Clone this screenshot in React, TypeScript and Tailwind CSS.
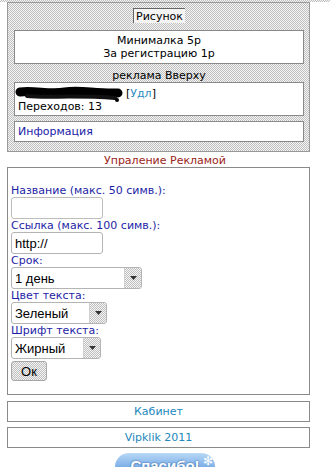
import React from "react";

const checker =
  "bg-[image:repeating-conic-gradient(#c0c0c0_0%_25%,#f4f4f4_0%_50%)] bg-[length:2px_2px]";

function Select({ w, text }: { w: string; text: string }) {
  return (
    <div
      className={`${w} h-[22px] flex items-stretch rounded-[3px] border border-[#b4b4b4] bg-white overflow-hidden`}
    >
      <div className="flex-1 flex items-center pl-[3px] font-['Liberation_Sans',Arial,sans-serif] text-[13px] text-black">
        {text}
      </div>
      <div
        className={`w-[17px] flex items-center justify-center ${checker} border-l border-[#d0d0d0]`}
      >
        <svg width="7" height="4" viewBox="0 0 7 4">
          <path d="M0 0 L7 0 L3.5 4 Z" fill="#333" />
        </svg>
      </div>
    </div>
  );
}

export default function App() {
  return (
    <div className="w-[330px] h-[467px] overflow-hidden bg-white font-['DejaVu_Sans',Verdana,sans-serif] text-[11px] leading-[13px] text-black">
      <div className={`h-[2px] ${checker}`} />
      {/* top panel */}
      <div
        className={`ml-[7px] w-[303px] border border-[#999] ${checker} pl-[6px] pr-[5px] pt-[5px] pb-[9px]`}
      >
        <div className="flex justify-center">
          <div className="h-[15px] leading-[15px] border-t border-l border-[#666] px-[2px] bg-[#f4f4f4]">
            Рисунок
          </div>
        </div>
        <div className="mt-[7px] border border-[#8a8a8a] bg-white py-[3px] text-center">
          <div>Минималка 5р</div>
          <div>За регистрацию 1р</div>
        </div>
        <div className="mt-[5px] text-center">реклама Вверху</div>
        <div className="border border-[#8a8a8a] bg-white pt-[4px] pb-[2px] pl-[3px]">
          <div className="flex items-center h-[13px]">
            <svg width="108" height="16" viewBox="0 0 108 16" className="-ml-[3px] mr-[3px]">
              <path
                d="M5 6 C 20 4, 35 9, 50 6 S 80 8, 103 7"
                stroke="#000"
                strokeWidth="9"
                strokeLinecap="round"
                fill="none"
              />
              <path
                d="M12 10 C 30 12, 60 9, 100 12"
                stroke="#111"
                strokeWidth="4"
                strokeLinecap="round"
                fill="none"
              />
              <circle cx="102" cy="14" r="2" fill="#000" />
            </svg>
            <span>
              [<span className="text-[#2a8cc4]">Удл</span>]
            </span>
          </div>
          <div>Переходов: 13</div>
        </div>
        <div className="mt-[5px] border border-[#8a8a8a] bg-white py-[3px] pl-[3px] text-[#1a1aa8]">
          Информация
        </div>
      </div>

      <div className="mt-[2px] text-center text-[#9a2418]">Упраление Рекламой</div>

      {/* form */}
      <div className="ml-[7px] w-[303px] border border-[#8a8a8a] bg-white pt-[16px] pb-[13px] pl-[3px]">
        <div className="text-[#1e1ea6]">Название (макс. 50 симв.):</div>
        <div className="w-[92px] h-[22px] rounded-[3px] border border-[#bdbdbd] bg-white" />
        <div className="text-[#1e1ea6]">Ссылка (макс. 100 симв.):</div>
        <div className="w-[92px] h-[22px] rounded-[3px] border border-[#b4b4b4] bg-white flex items-center pl-[3px] font-['Liberation_Sans',Arial,sans-serif] text-[13px]">
          http://
        </div>
        <div className="text-[#1e1ea6]">Срок:</div>
        <Select w="w-[131px]" text="1 день" />
        <div className="text-[#1e1ea6]">Цвет текста:</div>
        <Select w="w-[96px]" text="Зеленый" />
        <div className="text-[#1e1ea6]">Шрифт текста:</div>
        <Select w="w-[90px]" text="Жирный" />
        <div
          className={`mt-[2px] w-[36px] h-[20px] rounded-[3px] border border-[#a8a8a8] ${checker} flex items-center justify-center font-['Liberation_Sans',Arial,sans-serif] text-[13px]`}
        >
          Ок
        </div>
      </div>

      <div className="mt-[6px] ml-[7px] w-[303px] border border-[#8a8a8a] py-[3px] text-center text-[#2288bb]">
        Кабинет
      </div>
      <div className="mt-[5px] ml-[7px] w-[303px] border border-[#8a8a8a] py-[3px] text-center text-[#2288bb]">
        Vipklik 2011
      </div>

      <div className="mt-[5px] flex justify-center">
        <div className="relative w-[100px] h-[28px] rounded-full bg-gradient-to-b from-[#b8d8f6] to-[#3f86d6] flex items-start justify-center pt-[4px]">
          <span className="font-['Liberation_Sans',Arial,sans-serif] font-bold text-[15px] leading-[17px] text-white [text-shadow:0_0_2px_#1a4f8f]">
            Спасибо!
          </span>
          <span className="absolute right-[2px] top-[2px] text-white text-[12px] leading-[12px]">✻</span>
        </div>
      </div>
    </div>
  );
}
